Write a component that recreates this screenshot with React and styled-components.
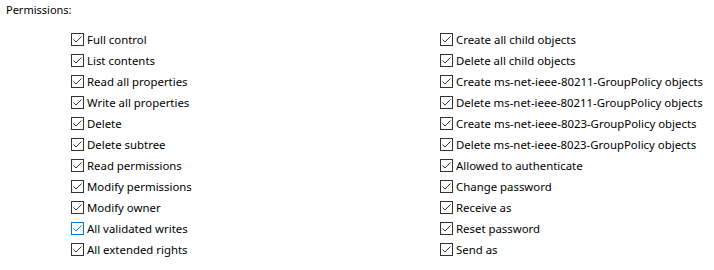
import React from "react";
import styled, { createGlobalStyle } from "styled-components";

const GlobalStyle = createGlobalStyle`
  html, body {
    margin: 0;
    background: #fff;
  }
  body {
    font-family: "Noto Sans", "Open Sans", sans-serif;
    font-size: 11.4px;
    color: #000;
  }
`;

const left = [
  { label: "Full control" },
  { label: "List contents" },
  { label: "Read all properties" },
  { label: "Write all properties" },
  { label: "Delete" },
  { label: "Delete subtree" },
  { label: "Read permissions" },
  { label: "Modify permissions" },
  { label: "Modify owner" },
  { label: "All validated writes", hover: true },
  { label: "All extended rights" },
];

const right = [
  { label: "Create all child objects" },
  { label: "Delete all child objects" },
  { label: "Create ms-net-ieee-80211-GroupPolicy objects" },
  { label: "Delete ms-net-ieee-80211-GroupPolicy objects" },
  { label: "Create ms-net-ieee-8023-GroupPolicy objects" },
  { label: "Delete ms-net-ieee-8023-GroupPolicy objects" },
  { label: "Allowed to authenticate" },
  { label: "Change password" },
  { label: "Receive as" },
  { label: "Reset password" },
  { label: "Send as" },
];

const Panel = styled.section`
  padding: 1px 0 0 6px;
`;

const Title = styled.div`
  height: 17px;
  line-height: 17px;
  font-size: 11px;
`;

const Columns = styled.div`
  display: grid;
  grid-template-columns: 369px 1fr;
  padding: 11px 0 0 65px;
`;

const Column = styled.div`
  display: flex;
  flex-direction: column;
`;

const Row = styled.label`
  display: flex;
  align-items: center;
  gap: 3px;
  height: 21px;
  white-space: nowrap;
`;

const Box = styled.span`
  box-sizing: border-box;
  width: 13px;
  height: 13px;
  border: 1px solid ${(p) => (p.$hover ? "#0078d7" : "#333")};
  background: #fff;
  display: flex;
  align-items: center;
  justify-content: center;
  flex-shrink: 0;

  svg {
    display: block;
  }
`;

const Check = ({ hover }) => (
  <Box $hover={hover}>
    <svg width="11" height="11" viewBox="0 0 11 11">
      <polyline
        points="1.5,5.5 4,8 9.5,2.5"
        fill="none"
        stroke={hover ? "#0078d7" : "#333"}
        strokeWidth="1"
      />
    </svg>
  </Box>
);

const List = ({ items }) => (
  <Column>
    {items.map((item, i) => (
      <Row key={i}>
        <Check hover={item.hover} />
        <span>{item.label}</span>
      </Row>
    ))}
  </Column>
);

export default function App() {
  return (
    <>
      <GlobalStyle />
      <Panel>
        <Title>Permissions:</Title>
        <Columns>
          <List items={left} />
          <List items={right} />
        </Columns>
      </Panel>
    </>
  );
}
